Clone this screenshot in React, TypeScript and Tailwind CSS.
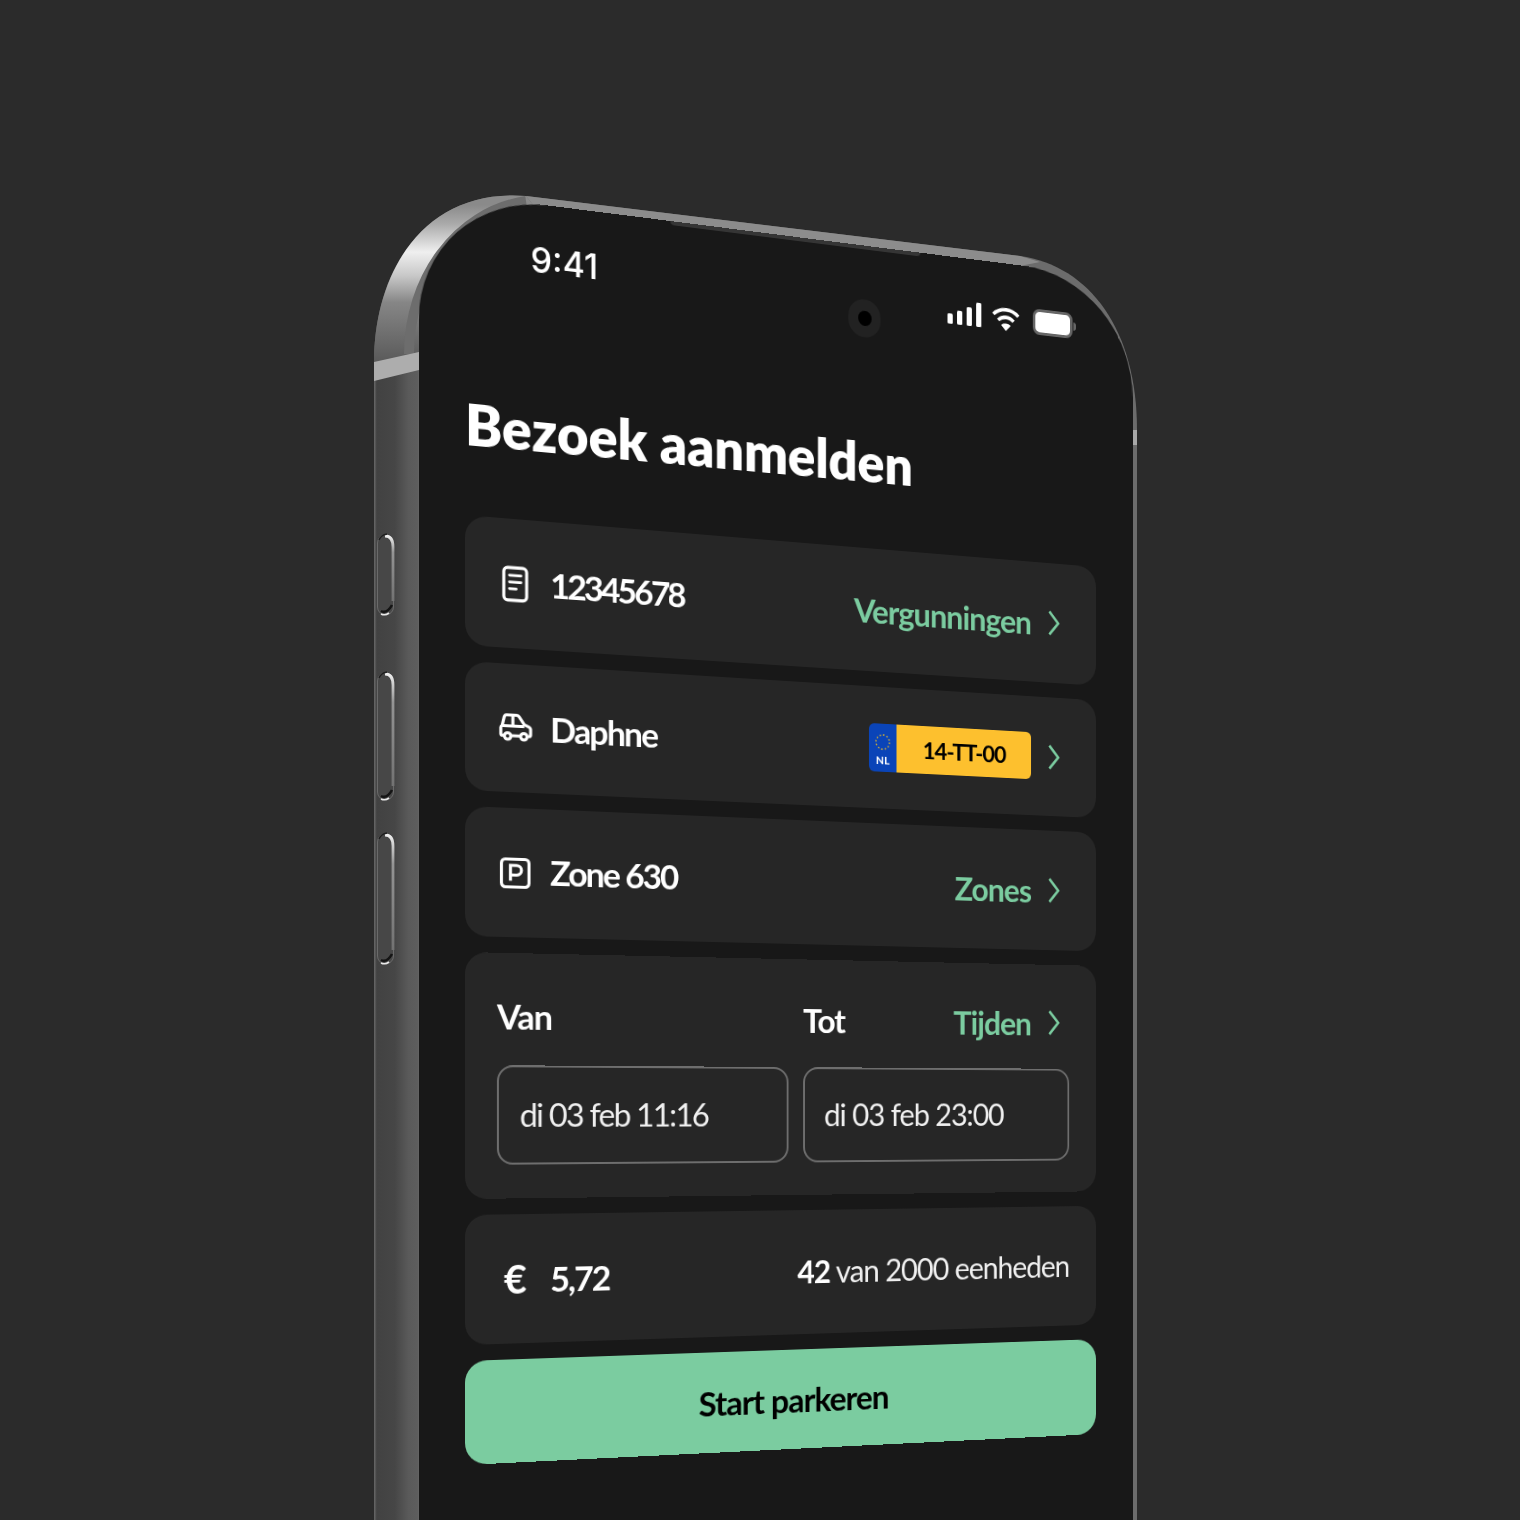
import React from 'react';

const font = "font-['Lato','Noto_Sans',sans-serif]";
const green = 'text-[#7bcca0]';

const Chevron = () => (
  <div className="w-[25px] ml-[20px] shrink-0">
    <svg viewBox="0 0 14 28" className="w-[14px] h-[28px]" fill="none" stroke="#7bcca0" strokeWidth="2.800">
      <path d="M1.500 1.500L12 14L1.500 26.500" />
    </svg>
  </div>
);

const DocIcon = () => (
  <svg viewBox="0 0 28 38" className="w-[27px] h-[37px]" fill="none" stroke="#fff" strokeWidth="3.200" strokeLinecap="round">
    <rect x="2" y="2" width="24" height="34" rx="4" />
    <path d="M8 10h12M8 17h12M8 24h7" strokeWidth="3" />
  </svg>
);

const CarIcon = () => (
  <svg viewBox="0 0 34 30" className="w-[34px] h-[29px]" fill="none" stroke="#fff" strokeWidth="3.200" strokeLinejoin="round">
    <path d="M5 23H3a1.600 1.600 0 0 1-1.600-1.600V15c0-1 .6-1.800 1.400-2.200L5 3.600C5.400 2.400 6.400 1.600 7.600 1.600H18c1 0 2 .5 2.600 1.400L26 11l4.600 2c1.200.5 2 1.600 2 2.900v5.500c0 .9-.7 1.600-1.600 1.600h-1" />
    <path d="M12 23h10M3 13h23M14 2v11" />
    <circle cx="8.500" cy="23.500" r="3.400" />
    <circle cx="25.500" cy="23.500" r="3.400" />
  </svg>
);

const ParkIcon = () => (
  <svg viewBox="0 0 32 32" className="w-[31px] h-[33px]" fill="none" stroke="#fff" strokeWidth="3.200">
    <rect x="1.600" y="1.600" width="28.800" height="28.800" rx="4" />
    <path d="M11 24V8h6.500a5 5 0 0 1 0 10H11" />
  </svg>
);

const Plate = () => (
  <div className="flex w-[186px] h-[51px] rounded-[6px] overflow-hidden">
    <div className="w-[31px] bg-[#0a44b8] flex flex-col items-center justify-end pb-[6px]">
      <svg viewBox="0 0 20 20" className="w-[19px] h-[19px] mb-[3px]">
        <circle cx="10" cy="10" r="8" fill="none" stroke="#c9a93a" strokeWidth="1.700" strokeDasharray="1.700 2.500" />
      </svg>
      <span className="text-[12px] leading-[13px] font-bold text-white">NL</span>
    </div>
    <div className="flex-1 bg-[#fdc02e] flex items-center justify-center text-[25px] font-bold text-black tracking-[-1px]">
      14-TT-00
    </div>
  </div>
);

const Row = ({ icon, label, labelClass, right, height }: { icon: React.ReactNode; label: string; labelClass: string; right: React.ReactNode; height: string }) => (
  <div className={`${height} rounded-[22px] bg-[#262626] flex items-center px-[32px]`}>
    <div className="w-[37px] mr-[17px] flex justify-center">{icon}</div>
    <span className={`text-[35px] font-bold text-white mb-[3px] ${labelClass}`}>{label}</span>
    <div className="ml-auto flex items-center">{right}</div>
  </div>
);

const Field = ({ value, first }: { value: string; first?: boolean }) => (
  <div className={`h-[100px] rounded-[16px] border-2 border-[#6e6e6e] flex items-center px-[21px] text-[33px] text-[#f0f0f0] ${first ? 'w-[306px] tracking-[-1.700px]' : 'flex-1 tracking-[-1.200px]'}`}>
    {value}
  </div>
);

const SideButton = ({ a, b }: { a: number; b: number }) => (
  <g fill="none">
    <rect x="377.500" y={a} width="16" height={b - a} rx="8" fill="#474747" stroke="#6a6a6a" strokeWidth="1" />
    <path d={`M385 ${a + 1}Q393 ${a + 1} 393 ${a + 12}V${b - 14}`} stroke="url(#btn)" strokeWidth="2.800" />
    <path d={`M379 ${a + 5}Q381 ${a} 387 ${a - 1}`} stroke="#1e1e1e" strokeWidth="1.400" />
    <path d={`M381 ${b - 4}Q387 ${b - 1} 392 ${b - 10}`} stroke="#141414" strokeWidth="2.500" />
    <path d={`M381 ${b - 1}Q385 ${b + 1} 389 ${b - 2}`} stroke="#e8e8e8" strokeWidth="1.600" />
  </g>
);

const PhoneBody = () => (
  <svg viewBox="0 0 1520 1520" className="absolute inset-0 w-[1520px] h-[1520px]">
    <defs>
      <linearGradient id="side" x1="374" x2="420" y1="0" y2="0" gradientUnits="userSpaceOnUse">
        <stop offset="0" stopColor="#6a6a6a" />
        <stop offset="0.06" stopColor="#424242" />
        <stop offset="0.45" stopColor="#464646" />
        <stop offset="0.75" stopColor="#5a5a5a" />
        <stop offset="0.96" stopColor="#5e5e5e" />
        <stop offset="1" stopColor="#7a7a7a" />
      </linearGradient>
      <linearGradient id="corner" x1="0" x2="0" y1="205" y2="362" gradientUnits="userSpaceOnUse">
        <stop offset="0" stopColor="#8a8a8a" />
        <stop offset="0.12" stopColor="#aaaaaa" />
        <stop offset="0.3" stopColor="#efefef" />
        <stop offset="0.45" stopColor="#c8c8c8" />
        <stop offset="0.62" stopColor="#868686" />
        <stop offset="1" stopColor="#5a5a5a" />
      </linearGradient>
      <linearGradient id="btn" x1="0" x2="0" y1="0" y2="1" gradientUnits="objectBoundingBox">
        <stop offset="0" stopColor="#eeeeee" />
        <stop offset="0.25" stopColor="#949494" />
        <stop offset="1" stopColor="#727272" />
      </linearGradient>
    </defs>
    {/* body silhouette */}
    <path d="M374 1520V362C374 270 425 188 526 196L1020 256C1090 266 1137 330 1137 430V1520Z" fill="#6c6c6c" />
    <path d="M374 1520V362H419V1520Z" fill="url(#side)" />
    {/* polished corner */}
    <path d="M374 364C374 270 425 188 526 196L534 206C470 208 419 270 419 352Z" fill="url(#corner)" />
    <path d="M409 354C409 280 455 212 526 201" fill="none" stroke="#6d6d6d" strokeWidth="10" />
    <path d="M374 362L419 352V370L374 381Z" fill="#adadad" />
    {/* top rim */}
    <path d="M526 196L1020 256L1040 262L1020 266L534 206Z" fill="#8c8c8c" />
    <path d="M1125 445H1137V430H1125Z" fill="#a8a8a8" />
    <SideButton a={535} b={615} />
    <SideButton a={673} b={800} />
    <SideButton a={834} b={964} />
  </svg>
);

export default function App() {
  return (
    <div className={`relative w-[1520px] h-[1520px] overflow-hidden bg-[#2b2b2b] pl-[419px] pt-[195px] ${font}`}>
      <PhoneBody />
      {/* Screen: flat layout, projected onto the tilted phone plane */}
      <div className="relative w-[780px] h-[1500px] bg-[#181818] rounded-t-[130px] origin-[46px_320px] [transform:matrix3d(1.002,0.0826,0,0.0001387,0,1,0,0,0,0,1,0,0,0,0,1)] pl-[46px] pr-[44px]">
        {/* speaker slit under the rim */}
        <div className="absolute top-0 left-[257px] w-[274px] h-[4px] rounded-b-[4px] bg-[#353535]" />
        <div className="h-[320px]">
          <div className="h-[118px] flex items-center pl-[66px] pr-[24px]">
            <span className="text-[35px] font-medium text-white mb-[5px] font-['Inter',sans-serif]">9:41</span>
            <div className="ml-auto flex items-center">
              <div className="w-[36px] h-[40px] mt-[36px] mr-[76px] rounded-full bg-[#222222] flex items-center justify-center">
                <div className="w-[15px] h-[16px] rounded-full bg-black" />
              </div>
              <svg viewBox="0 0 39 26" className="w-[39px] h-[26px] mr-[12px]" fill="#fff">
                <rect x="0" y="15" width="6" height="11" rx="1.500" />
                <rect x="11" y="11" width="6" height="15" rx="1.500" />
                <rect x="22" y="6" width="6" height="20" rx="1.500" />
                <rect x="33" y="0" width="6" height="26" rx="1.500" />
              </svg>
              <svg viewBox="0 0 33 27" className="w-[33px] h-[27px] mr-[15px]" fill="none" stroke="#fff" strokeWidth="3.800">
                <path d="M2 10c8-8 21-8 29 0M7.500 16c5-5 13-5 18 0" />
                <path d="M16.500 27l-5.500-6c3-3 8-3 11 0z" fill="#fff" stroke="none" />
              </svg>
              <div className="w-[47px] h-[28px] rounded-[8px] bg-white border-[3px] border-[#666]" />
              <div className="w-[3px] h-[9px] ml-[1px] rounded-r-full bg-[#666]" />
            </div>
          </div>
          <h1 className="mt-[81px] text-[56px] leading-[60px] font-extrabold text-white">Bezoek aanmelden</h1>
        </div>
        <div className="flex flex-col gap-[16px]">
          <Row height="h-[130px]" icon={<DocIcon />} label="12345678" labelClass="tracking-[-2.900px]" right={<><span className={`text-[35px] font-bold tracking-[-1.100px] ${green}`}>Vergunningen</span><Chevron /></>} />
          <Row height="h-[129px]" icon={<CarIcon />} label="Daphne" labelClass="tracking-[-1.800px]" right={<><Plate /><Chevron /></>} />
          <Row height="h-[130px]" icon={<ParkIcon />} label="Zone 630" labelClass="tracking-[-2px]" right={<><span className={`text-[35px] font-bold tracking-[-1.100px] ${green}`}>Zones</span><Chevron /></>} />
          <div className="h-[247px] rounded-[22px] bg-[#262626] px-[32px] pt-[40px]">
            <div className="flex items-center h-[46px] text-[35px] font-bold tracking-[-1.100px]">
              <span className="w-[322px] text-white">Van</span>
              <span className="text-white">Tot</span>
              <div className="ml-auto flex items-center">
                <span className={green}>Tijden</span><Chevron />
              </div>
            </div>
            <div className="flex gap-4 mt-[27px]">
              <Field value="di 03 feb 11:16" first />
              <Field value="di 03 feb 23:00" />
            </div>
          </div>
          <div className="h-[130px] rounded-[22px] bg-[#262626] flex items-center px-[32px]">
            <span className="w-[37px] mr-[17px] text-center text-[40px] font-bold text-white">€</span>
            <span className="text-[35px] font-bold text-white tracking-[-2px]">5,72</span>
            <span className="ml-auto text-[33px] text-[#f0f0f0] tracking-[-1.200px]"><b className="font-bold text-white">42</b> van 2000 eenheden</span>
          </div>
          <div className="h-[104px] rounded-[22px] bg-[#7bcca0] flex items-center justify-center text-[35px] font-bold text-black tracking-[-1px]">
            Start parkeren
          </div>
        </div>
      </div>
    </div>
  );
}
